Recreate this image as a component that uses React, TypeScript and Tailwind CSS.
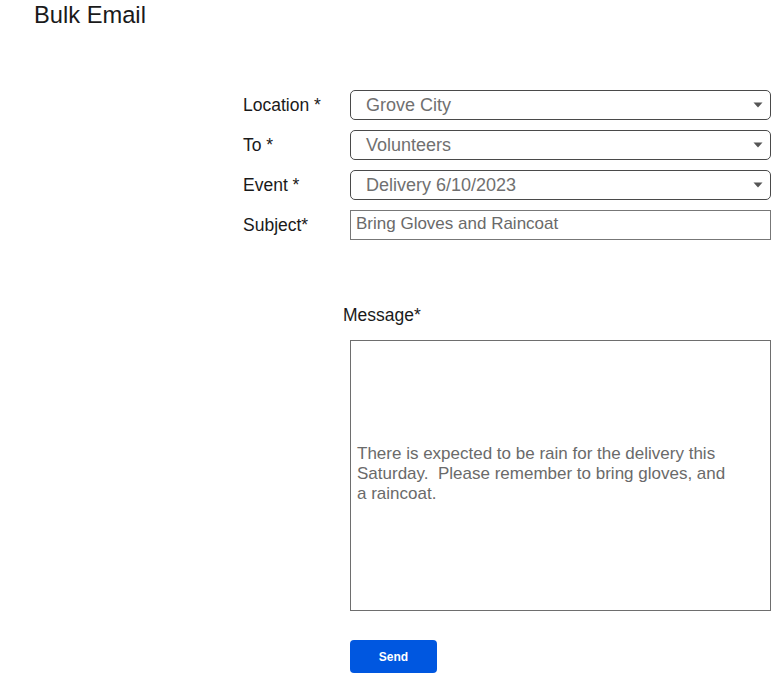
import React from "react";

const FONT = "font-['Liberation_Sans',Arial,sans-serif]";

function Caret() {
  return (
    <svg width="10" height="6" viewBox="0 0 10 6" className="shrink-0">
      <path d="M0.5 0.5 L9.5 0.5 L5 5.5 Z" fill="#555" />
    </svg>
  );
}

function SelectBox({ value }: { value: string }) {
  return (
    <div className="flex h-[30px] items-center justify-between rounded-[5px] border border-[#4a4a4a] bg-white pl-[15px] pr-[7px]">
      <span className="text-[18px] leading-none text-[#707070]">{value}</span>
      <Caret />
    </div>
  );
}

const rows = [
  { label: "Location *", value: "Grove City" },
  { label: "To *", value: "Volunteers" },
  { label: "Event *", value: "Delivery 6/10/2023" },
];

export default function App() {
  return (
    <div className={`${FONT} min-h-[674px] w-[771px] bg-white text-[#1a1a1a]`}>
      <h1 className="pl-[34px] text-[23.7px] leading-[30px]">Bulk Email</h1>

      <div className="ml-[243px] mt-[60px] w-[528px]">
        <div className="grid grid-cols-[107px_421px] gap-y-[10px]">
          {rows.map((r) => (
            <React.Fragment key={r.label}>
              <div className="flex items-center text-[17.5px]">{r.label}</div>
              <SelectBox value={r.value} />
            </React.Fragment>
          ))}
          <div className="flex items-center text-[17.5px]">Subject*</div>
          <div className="flex h-[30px] items-start border border-[#777] pl-[5px] pt-[3px]">
            <span className="text-[17px] leading-[20px] text-[#6a6a6a]">Bring Gloves and Raincoat</span>
          </div>
        </div>

        <div className="ml-[100px] mt-[65px] text-[17.5px] leading-[21px]">Message*</div>

        <div className="ml-[107px] mt-[14px] flex h-[271px] w-[421px] items-center border border-[#6e6e6e] px-[6px] pb-[4px]">
          <p className="whitespace-pre text-[17px] leading-[20px] text-[#6a6a6a]">
            {"There is expected to be rain for the delivery this\nSaturday.  Please remember to bring gloves, and\na raincoat."}
          </p>
        </div>

        <button
          type="button"
          className="ml-[107px] mt-[29px] flex h-[33px] w-[87px] items-center justify-center rounded-[4px] bg-[#0057e0] text-[12px] font-bold text-white"
        >
          Send
        </button>
      </div>
    </div>
  );
}
